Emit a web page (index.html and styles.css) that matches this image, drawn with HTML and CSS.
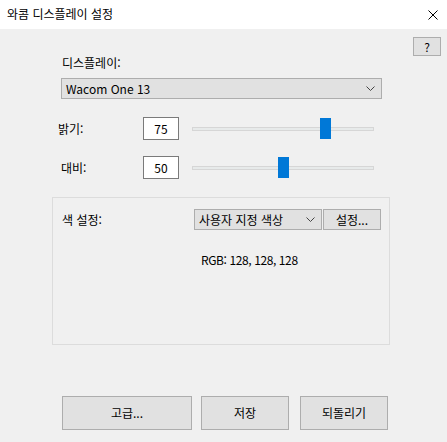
FILE: index.html
```html
<!DOCTYPE html>
<html lang="ko">
<head>
  <meta charset="UTF-8">
  <title>와콤 디스플레이 설정</title>
  <link rel="stylesheet" href="styles.css">
</head>
<body>
  <div class="window">
    <div class="titlebar">
      <span class="title">와콤 디스플레이 설정</span>
      <svg class="close" width="10" height="10" viewBox="0 0 10 10">
        <path d="M0.5 0.5 L9.5 9.5 M9.5 0.5 L0.5 9.5" stroke="#000" stroke-width="1" fill="none"/>
      </svg>
    </div>

    <div class="client">
      <div class="help-row">
        <button class="btn help">?</button>
      </div>

      <div class="display-label">디스플레이:</div>
      <div class="combo display-combo">
        <span>Wacom One 13</span>
        <svg class="chev" width="9" height="5" viewBox="0 0 9 5"><path d="M0.5 0.5 L4.5 4.5 L8.5 0.5" stroke="#444" fill="none"/></svg>
      </div>

      <div class="slider-row brightness">
        <span class="row-label">밝기:</span>
        <div class="num-box">75</div>
        <div class="slider" data-value="75">
          <div class="track"></div>
          <div class="thumb"></div>
        </div>
      </div>

      <div class="slider-row contrast">
        <span class="row-label">대비:</span>
        <div class="num-box">50</div>
        <div class="slider" data-value="50">
          <div class="track"></div>
          <div class="thumb"></div>
        </div>
      </div>

      <div class="group">
        <div class="color-row">
          <span class="color-label">색 설정:</span>
          <div class="combo color-combo">
            <span>사용자 지정 색상</span>
            <svg class="chev" width="9" height="5" viewBox="0 0 9 5"><path d="M0.5 0.5 L4.5 4.5 L8.5 0.5" stroke="#444" fill="none"/></svg>
          </div>
          <button class="btn setup">설정...</button>
        </div>
        <div class="rgb">RGB: 128, 128, 128</div>
      </div>

      <div class="bottom-buttons">
        <button class="btn wide">고급...</button>
        <button class="btn normal save">저장</button>
        <button class="btn normal">되돌리기</button>
      </div>
    </div>
  </div>

  <script>
    // place slider thumbs from their value
    document.querySelectorAll('.slider').forEach(slider => {
      const value = Number(slider.dataset.value);
      const thumb = slider.querySelector('.thumb');
      const room = slider.clientWidth - 11;
      thumb.style.left = `${Math.round(room * value / 100)}px`;
    });
  </script>
</body>
</html>
```

FILE: styles.css
```css
* {
  box-sizing: border-box;
}
body {
  margin: 0;
  font-family: "Noto Sans CJK KR", "Noto Sans", sans-serif;
  font-size: 12px;
  color: #000;
  background: #f0f0f0;
}
.window {
  width: 447px;
  height: 442px;
  display: flex;
  flex-direction: column;
}
.titlebar {
  height: 29px;
  background: #fff;
  display: flex;
  align-items: center;
  justify-content: space-between;
  padding: 0 9px 0 7px;
}
.title {
  font-size: 12px;
  line-height: 16px;
  margin-top: -1px;
}
.close {
  margin-top: 1px;
}
.client {
  flex: 1;
  background: #f0f0f0;
  display: flex;
  flex-direction: column;
}
.btn {
  font-family: inherit;
  font-size: 12px;
  line-height: 14px;
  background: #e1e1e1;
  border: 1px solid #adadad;
  color: #000;
  padding: 0;
  margin: 0;
  display: flex;
  align-items: center;
  justify-content: center;
}
.help-row {
  display: flex;
  justify-content: flex-end;
  padding: 8px 6px 0 0;
}
.help {
  width: 28px;
  height: 19px;
}
.display-label {
  margin: 0 0 0 62px;
  line-height: 14px;
  height: 14px;
}
.combo {
  background: #e1e1e1;
  border: 1px solid #adadad;
  display: flex;
  align-items: center;
  justify-content: space-between;
  height: 21px;
  line-height: 14px;
  padding: 0 6px 0 4px;
}
.display-combo {
  margin: 8px 0 0 61px;
  width: 321px;
}
.slider-row {
  display: flex;
  align-items: center;
  height: 23px;
  line-height: 14px;
}
.brightness {
  margin-top: 18px;
}
.contrast {
  margin-top: 16px;
}
.row-label {
  width: 85px;
  padding-left: 58px;
  box-sizing: content-box;
}
.contrast .row-label {
  padding-left: 61px;
  width: 82px;
}
.num-box {
  width: 36px;
  height: 23px;
  background: #fff;
  border: 1px solid #7a7a7a;
  display: flex;
  align-items: center;
  justify-content: center;
}
.slider {
  position: relative;
  width: 182px;
  height: 21px;
  margin-left: 13px;
  display: flex;
  align-items: center;
}
.track {
  width: 100%;
  height: 4px;
  margin-top: 1px;
  background: #e7eaea;
  border: 1px solid #d6d6d6;
}
.thumb {
  position: absolute;
  top: 0;
  width: 11px;
  height: 21px;
  background: #0078d7;
}
.group {
  margin: 18px 0 0 52px;
  width: 338px;
  height: 148px;
  border: 1px solid #dcdcdc;
  padding: 11px 0 0 9px;
}
.color-row {
  display: flex;
  align-items: center;
  height: 21px;
  line-height: 14px;
}
.color-label {
  width: 132px;
}
.color-combo {
  width: 128px;
  padding-right: 6px;
}
.setup {
  width: 58px;
  height: 21px;
  margin-left: 1px;
}
.rgb {
  margin: 23px 0 0 139px;
  line-height: 14px;
  letter-spacing: -0.4px;
}
.bottom-buttons {
  display: flex;
  margin: 51px 0 0 62px;
}
.bottom-buttons .btn {
  height: 34px;
}
.wide {
  width: 130px;
}
.normal {
  width: 88px;
}
.save {
  margin: 0 11px 0 9px;
}
```
